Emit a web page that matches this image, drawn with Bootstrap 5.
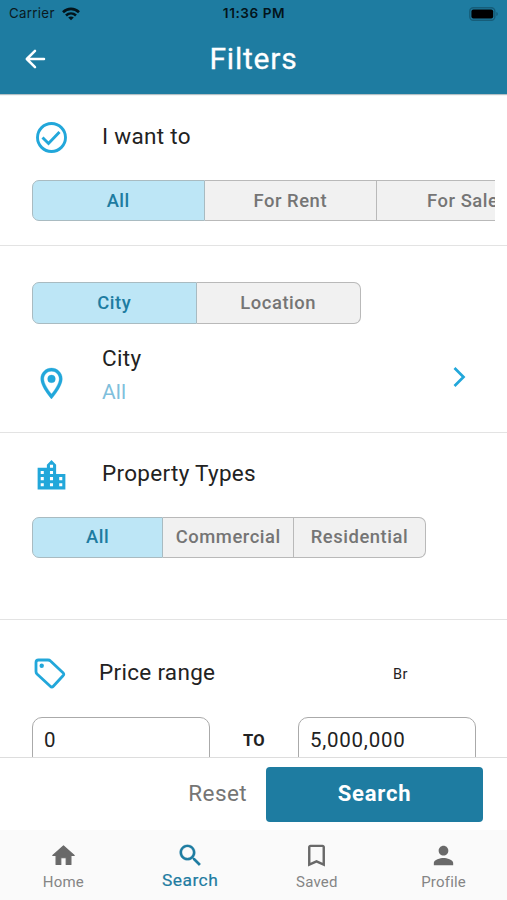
<!DOCTYPE html>
<html lang="en">
<head>
<meta charset="utf-8">
<meta name="viewport" content="width=device-width, initial-scale=1">
<title>Filters</title>
<link href="https://cdn.jsdelivr.net/npm/bootstrap@5.3.0/dist/css/bootstrap.min.css" rel="stylesheet">
<style>
:root { --brand:#1e7ca1; --accent:#22a7da; --ink:#222; --muted:#757575; }
body { font-family:Roboto,"Liberation Sans",sans-serif; color:var(--ink); background:#fff; }
svg { display:block; flex:none; }
.screen { height:900px; }
.app-head { height:94px; background:var(--brand); box-shadow:0 1px 1px #b4c0c5; z-index:1; }
.status { height:27px; padding:0 8px 0 9px; font-family:Inter,sans-serif; font-size:13.3px; letter-spacing:.3px; color:#0a1a21; }
.status > div { flex:1 1 0; }
.clock { font-weight:600; color:#03141b; font-size:13.6px; letter-spacing:.55px; }
.wifi { margin-left:7px; }
.title-row { height:64px; padding:0 24px; }
.title-row > div { flex:1 1 0; }
.page-title { font-size:30px; line-height:36px; letter-spacing:.8px; -webkit-text-stroke:.3px #fff; }
.block { border-bottom:1.5px solid #e3e3e3; padding-left:32px; }
.block-want { height:152px; padding-top:24px; padding-right:12px; }
.block-place { height:186.5px; padding-top:36px; padding-right:39px; }
.block-types { height:187.5px; padding-top:24px; }
.block-price { padding-top:34px; padding-right:31px; }
.icon-cell { width:70px; }
.heading { font-size:22.5px; line-height:36px; letter-spacing:.3px; }
.block-types .heading { line-height:33px; }
.seg { height:41.5px; overflow:hidden; }
.block-want .seg { height:41px; margin-top:22px; }
.block-types .seg { margin-top:23px; }
.seg .btn { border:1px solid #b9b9b9; border-radius:0; background:#f1f1f1; color:var(--muted); font-weight:500; font-size:18.4px; line-height:38px; letter-spacing:.55px; padding:0; margin:0; flex:none; }
.block-want .seg .btn { line-height:37px; }
.seg .btn:first-child { border-radius:7px 0 0 7px; }
.seg .btn:last-child { border-radius:0 7px 7px 0; }
.seg .btn + .btn { border-left:0; }
.seg .btn.active { background:#bde6f6; color:var(--brand); border-color:#a9bbc1; }
.w172 { width:172.5px; } .w164 { width:164.5px; } .w131 { width:131.2px; }
.place-row { margin-top:16px; }
.pin { margin:25px 0 0 1px; }
.chevron { margin-top:25px; }
.city-value { font-size:21px; line-height:30px; color:#7fbfdc; letter-spacing:.1px; padding-top:1px; }
.price-row { margin-top:25px; }
.money { width:178px; height:60px; border:1.5px solid #aaa; border-radius:10px; font-size:20.5px; line-height:24px; padding:10px 11px; letter-spacing:.75px; }
.between { font-weight:700; font-size:16.5px; line-height:24px; padding-top:12px; letter-spacing:.2px; }
.unit { font-size:14.5px; line-height:20px; letter-spacing:.5px; width:83px; padding-top:11px; }
.actions { height:73px; border-top:1.5px solid #ddd; padding-right:24px; }
.reset { color:var(--muted); font-size:22.5px; letter-spacing:.4px; line-height:30px; padding:0 19px 2px 0; }
.search-btn { width:217px; height:55px; background:var(--brand); color:#fff; border:0; border-radius:4px; font-weight:700; font-size:22px; letter-spacing:.8px; padding:0 0 2px; }
.tabs { height:70px; background:#fafafa; color:#696969; }
.tab { flex:1 1 0; padding-top:11px; color:inherit; text-decoration:none; }
.tab span { font-size:15px; line-height:20px; letter-spacing:.2px; margin-top:2px; color:#858585; }
.tab svg { height:29px; }
.tab.current { color:var(--brand); }
.tab.current span { color:var(--brand); font-size:17.4px; letter-spacing:.45px; margin-top:0; -webkit-text-stroke:.2px; }
</style>
</head>
<body>
<div class="screen d-flex flex-column overflow-hidden">
  <header class="app-head flex-shrink-0">
    <div class="status d-flex align-items-center">
      <div class="d-flex align-items-center"><span>Carrier</span>
        <svg class="wifi" width="18" height="14" viewBox="0 0 18 14" fill="none" stroke="#03141b" stroke-width="2.6"><path d="M1 5.2C5.6.7 12.4.7 17 5.2M4 8.5c2.9-2.7 7.1-2.7 10 0"/><path d="M9 13.3 6.2 10.6c1.6-1.4 4-1.4 5.6 0z" fill="#03141b" stroke="none"/></svg>
      </div>
      <div class="clock text-center">11:36 PM</div>
      <div class="d-flex justify-content-end"><svg width="30" height="14" viewBox="0 0 30 14"><rect x=".8" y=".8" width="25" height="12.4" rx="3.5" fill="none" stroke="#165d79" stroke-width="1.4"/><rect x="2.4" y="2.4" width="21.8" height="9.2" rx="2" fill="#000"/><path d="M27.3 5v4q1.6-.7 1.6-2t-1.6-2z" fill="#165d79"/></svg></div>
    </div>
    <div class="title-row d-flex align-items-center text-white">
      <div><svg width="24" height="24" viewBox="0 0 24 24" fill="none" stroke="#fff" stroke-width="2.5" stroke-linecap="round" stroke-linejoin="round"><path d="M11 3.8 2.8 12l8.2 8.2M3 12h17"/></svg></div>
      <div class="page-title text-center">Filters</div>
      <div></div>
    </div>
  </header>

  <main class="flex-grow-1 overflow-hidden">
    <section class="block block-want">
      <div class="d-flex">
        <div class="icon-cell"><svg width="40" height="40" viewBox="0 0 40 40" fill="none" stroke="#22a7da" stroke-width="2.9"><circle cx="19.500" cy="19.500" r="14"/><path d="m10.500 19.500 6 6L27.500 14"/></svg></div>
        <div class="heading">I want to</div>
      </div>
      <div class="seg d-flex"><button class="btn w172 active">All</button><button class="btn w172">For Rent</button><button class="btn w172">For Sale</button></div>
    </section>

    <section class="block block-place">
      <div class="seg d-flex"><button class="btn w164 active">City</button><button class="btn w164">Location</button></div>
      <div class="place-row d-flex">
        <div class="icon-cell"><svg class="pin" width="37" height="37" viewBox="0 0 24 24" fill="#22a7da" stroke="#22a7da" stroke-width=".2"><path d="M12 2C8.130 2 5 5.130 5 9c0 5.250 7 13 7 13s7-7.750 7-13c0-3.870-3.130-7-7-7zM7 9c0-2.760 2.240-5 5-5s5 2.240 5 5c0 2.880-2.880 7.190-5 9.880C9.920 16.210 7 11.850 7 9z"/><circle cx="12" cy="9" r="2.500"/></svg></div>
        <div class="flex-grow-1"><div class="heading">City</div><div class="city-value">All</div></div>
        <svg class="chevron" width="18" height="24" viewBox="0 0 18 24" fill="none" stroke="#22a7da" stroke-width="2.700"><path d="m4.500 3 9 9-9 9"/></svg>
      </div>
    </section>

    <section class="block block-types">
      <div class="d-flex">
        <div class="icon-cell"><svg width="37" height="37" style="margin-left:1px" viewBox="0 0 24 24" fill="#22a7da"><path d="M15 11V5l-3-3-3 3v2H3v14h18V11h-6zm-8 8H5v-2h2v2zm0-4H5v-2h2v2zm0-4H5V9h2v2zm6 8h-2v-2h2v2zm0-4h-2v-2h2v2zm0-4h-2V9h2v2zm0-4h-2V5h2v2zm6 12h-2v-2h2v2zm0-4h-2v-2h2v2z"/></svg></div>
        <div class="heading">Property Types</div>
      </div>
      <div class="seg d-flex"><button class="btn w131 active">All</button><button class="btn w131">Commercial</button><button class="btn w131">Residential</button></div>
    </section>

    <section class="block block-price">
      <div class="d-flex">
        <div class="icon-cell" style="width:67px"><svg width="38" height="38" viewBox="0 0 38 38" fill="none" stroke="#22a7da" stroke-width="2.800" stroke-linejoin="round"><path d="M4 8.500Q4 6 6.500 6H16q1.500 0 2.500 1L31 18.700q1.600 1.500 0 3l-9.700 10.500q-1.500 1.600-3 0L5 20q-1-1-1-2.500z"/><circle cx="9.700" cy="11.800" r="2.200" fill="#22a7da" stroke="none"/></svg></div>
        <div class="heading flex-grow-1">Price range</div>
        <div class="unit">Br</div>
      </div>
      <div class="price-row d-flex justify-content-between"><div class="money">0</div><div class="between">TO</div><div class="money">5,000,000</div></div>
    </section>
  </main>

  <div class="actions d-flex align-items-center justify-content-end flex-shrink-0 bg-white">
    <div class="reset">Reset</div>
    <button class="btn search-btn">Search</button>
  </div>

  <nav class="tabs d-flex flex-shrink-0">
    <a class="tab d-flex flex-column align-items-center"><svg width="27" viewBox="0 0 24 24" fill="currentColor" stroke="currentColor" stroke-linejoin="round"><path d="M9.600 20v-6h4.800v6h4.200v-8h2.900L12 3.500 2.500 12h2.900v8z"/></svg><span>Home</span></a>
    <a class="tab current d-flex flex-column align-items-center"><svg width="29" viewBox="0 0 24 24" fill="currentColor" stroke="currentColor" stroke-width=".2"><path d="M15.500 14h-.79l-.28-.27C15.410 12.590 16 11.110 16 9.500 16 5.910 13.090 3 9.500 3S3 5.910 3 9.500 5.910 16 9.500 16c1.610 0 3.090-.59 4.230-1.570l.27.28v.79l5 4.990L20.490 19l-4.990-5zm-6 0C7.010 14 5 11.990 5 9.500S7.010 5 9.500 5 14 7.010 14 9.500 11.990 14 9.500 14z"/></svg><span>Search</span></a>
    <a class="tab d-flex flex-column align-items-center"><svg width="29" viewBox="0 0 24 24" fill="currentColor"><path d="M17 3H7c-1.100 0-1.990.9-1.990 2L5 21l7-3 7 3V5c0-1.100-.9-2-2-2zm0 15-5-2.180L7 18V5h10v13z"/></svg><span>Saved</span></a>
    <a class="tab d-flex flex-column align-items-center"><svg width="29" viewBox="0 0 24 24" fill="currentColor"><path d="M12 12c2.210 0 4-1.790 4-4s-1.790-4-4-4-4 1.790-4 4 1.790 4 4 4zm0 2c-2.670 0-8 1.340-8 4v2h16v-2c0-2.660-5.330-4-8-4z"/></svg><span>Profile</span></a>
  </nav>
</div>
<script src="https://cdn.jsdelivr.net/npm/bootstrap@5.3.0/dist/js/bootstrap.bundle.min.js"></script>
</body>
</html>
